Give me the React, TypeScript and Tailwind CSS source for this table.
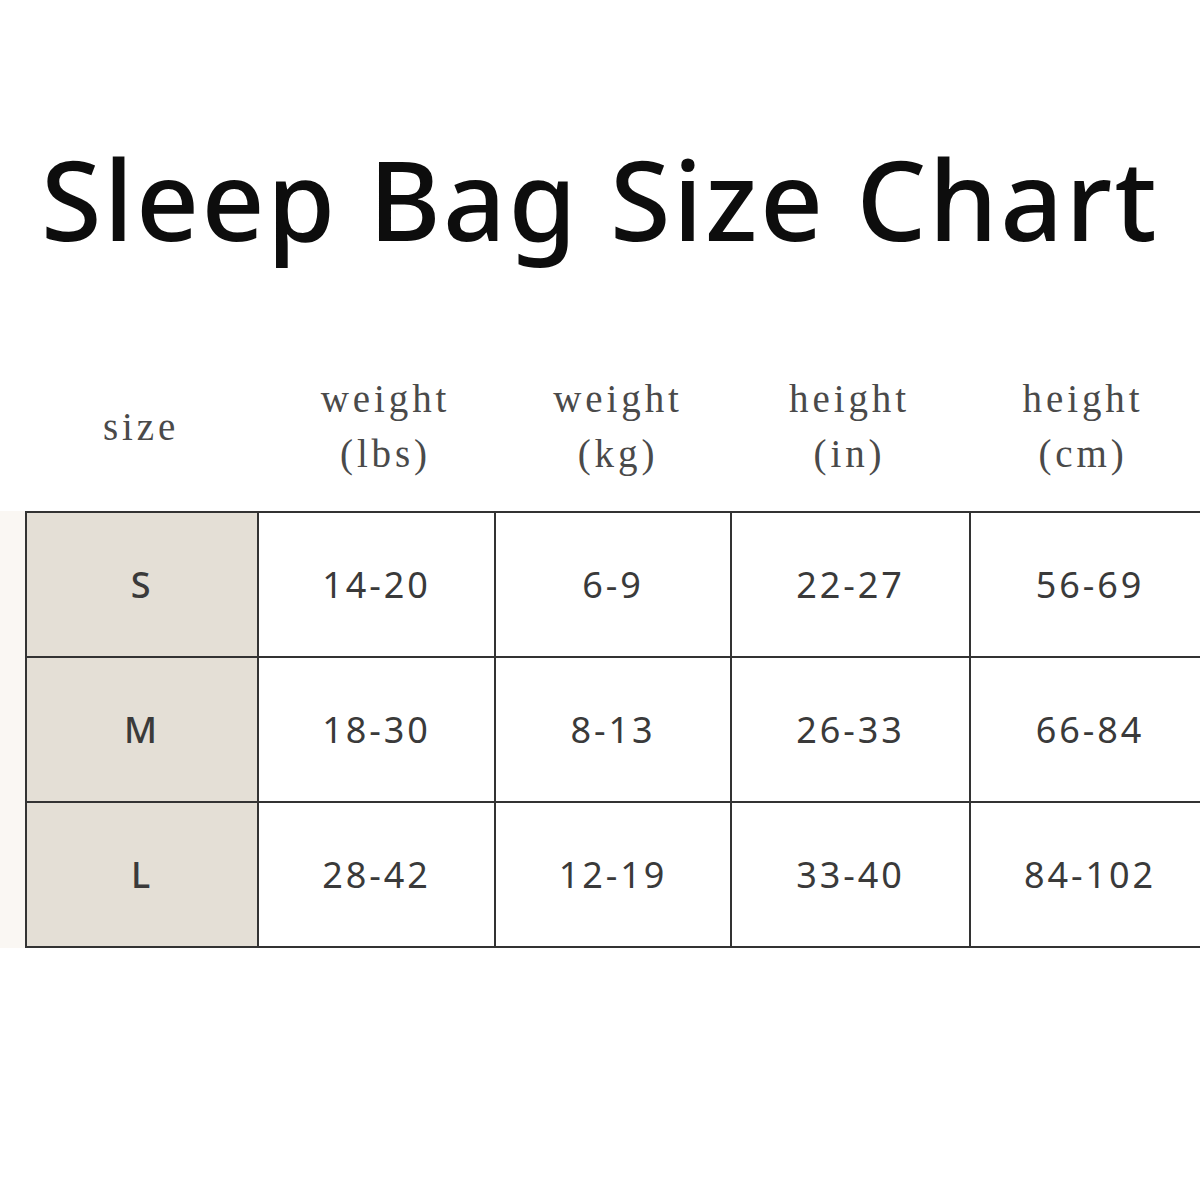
const HEADERS = [
  { top: "size" },
  { top: "weight", bottom: "(lbs)" },
  { top: "weight", bottom: "(kg)" },
  { top: "height", bottom: "(in)" },
  { top: "height", bottom: "(cm)" },
];

const ROWS = [
  ["S", "14-20", "6-9", "22-27", "56-69"],
  ["M", "18-30", "8-13", "26-33", "66-84"],
  ["L", "28-42", "12-19", "33-40", "84-102"],
];

const COLS = "grid-cols-[232px_237px_236px_239px_240px]";

export default function App() {
  return (
    <div className="h-[1200px] w-[1200px] overflow-hidden bg-white">
      <h1 className="pt-[143px] text-center font-['Noto_Sans',sans-serif] text-[110px] font-medium leading-none tracking-[0.022em] text-[#0d0d0d]">
        Sleep Bag Size Chart
      </h1>

      <div className={`ml-[25px] mt-[118px] grid ${COLS} font-['Liberation_Serif',serif] text-[39px] tracking-[0.1em] text-[#4a4a4a]`}>
        {HEADERS.map((h, i) => (
          <div
            key={i}
            className={`flex h-[110px] flex-col items-center justify-center leading-[55px] ${
              i === 1 ? "pl-[20px]" : i === 2 ? "pl-[12px]" : i === 4 ? "pr-[12px]" : ""
            }`}
          >
            <span>{h.top}</span>
            {h.bottom && <span>{h.bottom}</span>}
          </div>
        ))}
      </div>

      <div className="mt-[30px] flex">
        <div className="w-[25px] shrink-0 bg-[#faf7f3]" />
        <div className={`grid shrink-0 ${COLS} border-l-2 border-t-2 border-[#333] font-['Noto_Sans',sans-serif] text-[36px] tracking-[0.08em] text-[#3a3a3a]`}>
          {ROWS.map((row) =>
            row.map((cell, j) => (
              <div
                key={row[0] + j}
                className={`flex h-[145px] items-center justify-center border-b-2 border-r-2 border-[#333] ${
                  j === 0 ? "bg-[#e4dfd6] font-medium" : "bg-white"
                }`}
              >
                {cell}
              </div>
            ))
          )}
        </div>
      </div>
    </div>
  );
}
